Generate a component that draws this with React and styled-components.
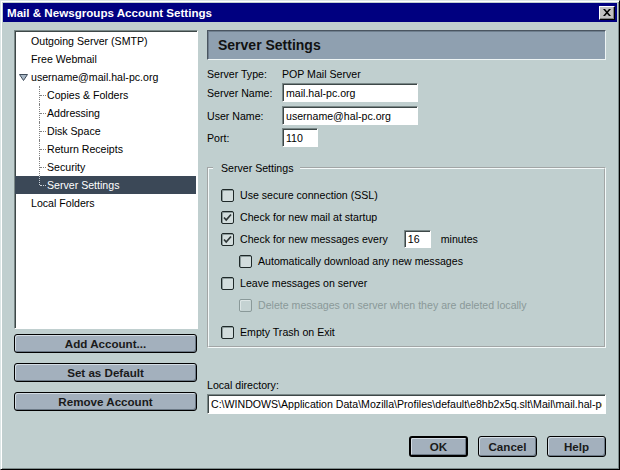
import React from 'react'
import styled, { createGlobalStyle, css } from 'styled-components'

const GlobalStyle = createGlobalStyle`
  html, body {
    margin: 0;
    padding: 0;
    background: #c0cfcf;
  }
  body {
    font-family: "Liberation Sans", Arial, sans-serif;
    font-size: 10.6px;
    color: #000;
  }
`

const Window = styled.div`
  width: 620px;
  height: 470px;
  box-sizing: border-box;
  background: #c0cfcf;
  border: 1px solid;
  border-color: #dce6e6 #000 #000 #dce6e6;
  box-shadow: inset 1px 1px #fff, inset -1px -1px #7e8c8c;
  padding: 2px;
  display: flex;
  flex-direction: column;
`

const TitleBar = styled.div`
  height: 19px;
  flex: none;
  background: #000080;
  color: #fff;
  display: flex;
  align-items: center;
  justify-content: space-between;
  padding: 0 2px 0 4px;
  font-weight: bold;
  font-size: 11.6px;
`

const CloseButton = styled.div`
  width: 16px;
  height: 14px;
  box-sizing: border-box;
  background: #c0c0c0;
  border: 1px solid;
  border-color: #fff #000 #000 #fff;
  box-shadow: inset -1px -1px #808080;
  display: flex;
  align-items: center;
  justify-content: center;
`

const Body = styled.div`
  display: grid;
  grid-template-columns: 184px 399px;
  column-gap: 9px;
  padding: 8px 11px 0 11px;
`

const LeftColumn = styled.div`
  display: flex;
  flex-direction: column;
`

const Tree = styled.div`
  height: 299px;
  box-sizing: border-box;
  background: #fff;
  border: 1px solid;
  border-color: #7a8888 #fff #fff #7a8888;
  box-shadow: inset 1px 1px #3e4848;
  padding-top: 1px;
  font-size: 10.6px;
`

const TreeRow = styled.div`
  position: relative;
  height: 18px;
  display: flex;
  align-items: center;
  white-space: nowrap;
  padding-left: ${p => (p.$level === 1 ? 32 : p.$twisty ? 4 : 16)}px;
  color: ${p => (p.$selected ? '#fff' : '#000')};
  background: ${p => (p.$selected ? '#3b4857' : 'transparent')};
  margin: 0 1px 0 0;

  ${p =>
    p.$level === 1 &&
    css`
      &::before {
        content: '';
        position: absolute;
        left: 24px;
        top: 0;
        height: ${p.$last ? '50%' : '100%'};
        border-left: 1px dotted ${p.$selected ? '#c8d0d8' : '#808080'};
      }
      &::after {
        content: '';
        position: absolute;
        left: 25px;
        top: 50%;
        width: 6px;
        border-top: 1px dotted ${p.$selected ? '#c8d0d8' : '#808080'};
      }
    `}
`

const Twisty = styled.svg`
  width: 9px;
  height: 7px;
  margin-right: 3px;
  flex: none;
`

const SideButtons = styled.div`
  display: flex;
  flex-direction: column;
  gap: 10px;
  margin-top: 5px;
`

const Button = styled.div`
  box-sizing: border-box;
  width: ${p => p.$width}px;
  height: ${p => p.$height}px;
  display: flex;
  align-items: center;
  justify-content: center;
  background: #a3b0bd;
  border: ${p => (p.$default ? 2 : 1)}px solid #000;
  border-radius: 3px;
  box-shadow: inset 1px 1px #d3dce4, inset -1px -1px #6c7986;
  font-weight: bold;
  font-size: 11.6px;
  color: #1a1a1a;
`

const RightColumn = styled.div`
  display: flex;
  flex-direction: column;
`

const Header = styled.div`
  height: 30px;
  box-sizing: border-box;
  background: #8fa0b0;
  border: 1px solid;
  border-color: #4a5560 #eef4f4 #eef4f4 #4a5560;
  box-shadow: inset 1px 1px #6f7f8e;
  display: flex;
  align-items: center;
  padding-left: 10px;
  font-weight: bold;
  font-size: 14px;
  color: #111;
`

const FieldRow = styled.div`
  display: flex;
  align-items: center;
  height: 19px;
  margin-top: ${p => p.$mt}px;
`

const FieldLabel = styled.span`
  width: 75px;
  flex: none;
`

const TextInput = styled.input`
  box-sizing: border-box;
  width: ${p => p.$width}px;
  height: ${p => p.$height || 19}px;
  margin: 0;
  padding: 0 3px;
  background: #fff;
  border: 1px solid;
  border-color: #7a8888 #fff #fff #7a8888;
  box-shadow: inset 1px 1px #3e4848;
  font-family: "Liberation Sans", Arial, sans-serif;
  font-size: 10.6px;
  color: #000;
  outline: none;
`

const Group = styled.fieldset`
  margin: 14px 0 0 0;
  padding: 9px 12px 3px 12px;
  border: 2px groove #f4fafa;
  min-width: 0;
`

const Legend = styled.legend`
  line-height: 14px;
  padding: 0 7px 0 8px;
  margin-left: -8px;
`

const CheckRow = styled.div`
  display: flex;
  align-items: center;
  height: 22px;
  padding-left: ${p => p.$indent || 0}px;
  margin-top: ${p => p.$mt || 0}px;
  color: ${p => (p.$disabled ? '#8a9999' : '#000')};
  white-space: nowrap;
`

const Box = styled.span`
  width: 13px;
  height: 13px;
  box-sizing: border-box;
  flex: none;
  margin-right: 6px;
  border: 1px solid ${p => (p.$disabled ? '#8a9999' : '#1e2828')};
  border-radius: 2px;
  background: ${p => (p.$disabled ? '#c4d2d2' : '#d2dddd')};
  box-shadow: inset 1px 1px ${p => (p.$disabled ? '#dde6e6' : '#8d9c9c')};
  display: flex;
  align-items: center;
  justify-content: center;
`

const MinutesInput = styled(TextInput)`
  margin: 0 10px 0 16px;
`

const DirLabel = styled.div`
  line-height: 14px;
  margin-top: 30px;
`

const DirInput = styled(TextInput)`
  margin-top: 2px;
`

const Footer = styled.div`
  display: flex;
  justify-content: flex-end;
  gap: 10px;
  margin-top: 22px;
`

const Checkbox = ({ checked, disabled }) => (
  <Box $disabled={disabled}>
    {checked && (
      <svg width="9" height="9" viewBox="0 0 9 9">
        <polyline points="1,4.5 3.2,7 8,1.5" fill="none" stroke="#2e3636" strokeWidth="1.7" />
      </svg>
    )}
  </Box>
)

const treeItems = [
  { label: 'Outgoing Server (SMTP)', level: 0 },
  { label: 'Free Webmail', level: 0 },
  { label: 'username@mail.hal-pc.org', level: 0, twisty: true },
  { label: 'Copies & Folders', level: 1 },
  { label: 'Addressing', level: 1 },
  { label: 'Disk Space', level: 1 },
  { label: 'Return Receipts', level: 1 },
  { label: 'Security', level: 1 },
  { label: 'Server Settings', level: 1, selected: true, last: true },
  { label: 'Local Folders', level: 0 },
]

export default function App() {
  return (
    <>
      <GlobalStyle />
      <Window>
        <TitleBar>
          <span>Mail &amp; Newsgroups Account Settings</span>
          <CloseButton>
            <svg width="8" height="7" viewBox="0 0 8 7">
              <path d="M0 0h2l2 2.2L6 0h2L5 3.5 8 7H6L4 4.8 2 7H0l3-3.5z" fill="#000" />
            </svg>
          </CloseButton>
        </TitleBar>
        <Body>
          <LeftColumn>
            <Tree>
              {treeItems.map(item => (
                <TreeRow
                  key={item.label}
                  $level={item.level}
                  $twisty={item.twisty}
                  $selected={item.selected}
                  $last={item.last}
                >
                  {item.twisty && (
                    <Twisty viewBox="0 0 9 7">
                      <polygon points="0.5,0.5 8.5,0.5 4.5,6.5" fill="#a9b8c6" stroke="#3e4c5a" strokeWidth="1" />
                    </Twisty>
                  )}
                  {item.label}
                </TreeRow>
              ))}
            </Tree>
            <SideButtons>
              <Button $width={183} $height={19}>Add Account...</Button>
              <Button $width={183} $height={19}>Set as Default</Button>
              <Button $width={183} $height={19}>Remove Account</Button>
            </SideButtons>
          </LeftColumn>
          <RightColumn>
            <Header>Server Settings</Header>
            <FieldRow $mt={4}>
              <FieldLabel>Server Type:</FieldLabel>
              <span>POP Mail Server</span>
            </FieldRow>
            <FieldRow $mt={0}>
              <FieldLabel>Server Name:</FieldLabel>
              <TextInput $width={136} readOnly value="mail.hal-pc.org" />
            </FieldRow>
            <FieldRow $mt={4}>
              <FieldLabel>User Name:</FieldLabel>
              <TextInput $width={136} readOnly value="username@hal-pc.org" />
            </FieldRow>
            <FieldRow $mt={3}>
              <FieldLabel>Port:</FieldLabel>
              <TextInput $width={36} readOnly value="110" />
            </FieldRow>
            <Group>
              <Legend>Server Settings</Legend>
              <CheckRow>
                <Checkbox />
                Use secure connection (SSL)
              </CheckRow>
              <CheckRow>
                <Checkbox checked />
                Check for new mail at startup
              </CheckRow>
              <CheckRow>
                <Checkbox checked />
                Check for new messages every
                <MinutesInput $width={27} $height={18} readOnly value="16" />
                minutes
              </CheckRow>
              <CheckRow $indent={18}>
                <Checkbox />
                Automatically download any new messages
              </CheckRow>
              <CheckRow>
                <Checkbox />
                Leave messages on server
              </CheckRow>
              <CheckRow $indent={18} $disabled>
                <Checkbox disabled />
                Delete messages on server when they are deleted locally
              </CheckRow>
              <CheckRow $mt={5}>
                <Checkbox />
                Empty Trash on Exit
              </CheckRow>
            </Group>
            <DirLabel>Local directory:</DirLabel>
            <DirInput
              $width={399}
              $height={20}
              readOnly
              value="C:\WINDOWS\Application Data\Mozilla\Profiles\default\e8hb2x5q.slt\Mail\mail.hal-pc.org"
            />
            <Footer>
              <Button $width={59} $height={21} $default>OK</Button>
              <Button $width={59} $height={21}>Cancel</Button>
              <Button $width={59} $height={21}>Help</Button>
            </Footer>
          </RightColumn>
        </Body>
      </Window>
    </>
  )
}
